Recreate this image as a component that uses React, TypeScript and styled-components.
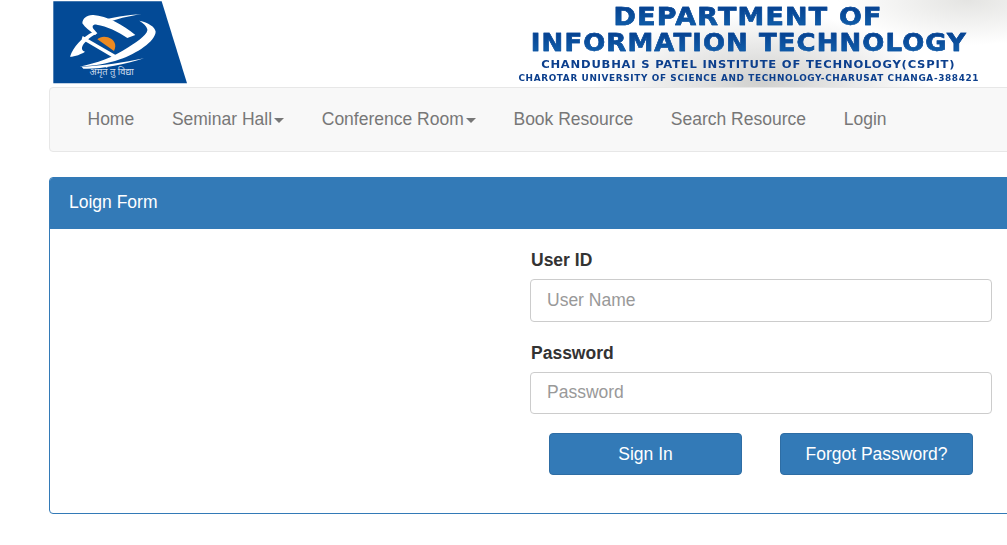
import React from 'react';
import styled, { createGlobalStyle } from 'styled-components';

const NAV_ITEMS = [
  { label: 'Home' },
  { label: 'Seminar Hall', caret: true },
  { label: 'Conference Room', caret: true },
  { label: 'Book Resource' },
  { label: 'Search Resource' },
  { label: 'Login' },
];

export default function App() {
  return (
    <Page>
      <GlobalStyle />
      <Banner>
        <Logo />
        <Heading>
          <MainTitle>DEPARTMENT OF</MainTitle>
          <DeptTitle>INFORMATION TECHNOLOGY</DeptTitle>
          <Institute>CHANDUBHAI S PATEL INSTITUTE OF TECHNOLOGY(CSPIT)</Institute>
          <University>CHAROTAR UNIVERSITY OF SCIENCE AND TECHNOLOGY-CHARUSAT CHANGA-388421</University>
        </Heading>
      </Banner>
      <Navbar>
        {NAV_ITEMS.map((item) => (
          <NavLink key={item.label} href="#">
            {item.label}
            {item.caret && <Caret />}
          </NavLink>
        ))}
      </Navbar>
      <Panel>
        <PanelHeading>Loign Form</PanelHeading>
        <PanelBody>
          <Form>
            <Label>User ID</Label>
            <Input placeholder="User Name" />
            <Label>Password</Label>
            <Input placeholder="Password" type="password" />
            <Buttons>
              <Button type="button">Sign In</Button>
              <Button type="button">Forgot Password?</Button>
            </Buttons>
          </Form>
        </PanelBody>
      </Panel>
    </Page>
  );
}

function Logo() {
  return (
    <LogoMark viewBox="39 0 405 252" aria-hidden="true">
      <polygon points="40,4 365,4 441,250 40,250" fill="#034a96" />
      <path
        d="M127 70C128 55 140 44 160 45C200 47 250 75 286 105L262 114C235 95 200 78 170 74C160 73 155 78 160 86L172 100L165 105C148 92 135 82 127 70Z"
        fill="#fff"
      />
      <path d="M305 43C270 47 225 58 190 72L180 64C215 52 260 45 305 43Z" fill="#fff" />
      <path
        d="M298 62C325 68 345 80 347 95C345 125 290 160 240 178C200 192 160 198 118 200C170 190 220 172 265 142C300 120 325 100 322 88C320 78 310 70 298 62Z"
        fill="#fff"
      />
      <path d="M125 200C190 198 250 188 312 175C250 195 180 208 130 206Z" fill="#fff" />
      <path
        d="M160 95C125 112 100 140 90 170C105 170 125 162 135 155C120 150 125 135 140 122C150 113 158 107 168 102Z"
        fill="#fff"
      />
      <path d="M128 108L232 168L222 175L125 118Z" fill="#fff" />
      <path d="M172 118C180 110 192 108 204 112C222 118 232 134 222 153Z" fill="#ec8a22" />
      <LogoMotto x="215" y="224">अमृतं तु विद्या</LogoMotto>
    </LogoMark>
  );
}

const GlobalStyle = createGlobalStyle`
  html, body {
    margin: 0;
    background: #fff;
    overflow: hidden;
  }
  body {
    font-family: "Liberation Sans", Arial, sans-serif;
    color: #333;
  }
`;

const Page = styled.div`
  width: 1007px;
  height: 545px;
  overflow: hidden;
  padding-left: 49px;
  box-sizing: border-box;
`;

const Banner = styled.header`
  display: flex;
  justify-content: space-between;
  width: 958px;
  height: 87px;
  padding-left: 4px;
  box-sizing: border-box;
`;

const LogoMark = styled.svg`
  width: 135px;
  height: 84px;
  flex: none;
`;

const LogoMotto = styled.text`
  fill: #cfdcec;
  font-family: "Noto Sans", "DejaVu Sans", sans-serif;
  font-size: 28px;
  text-anchor: middle;
`;

const Heading = styled.div`
  width: 489px;
  height: 87px;
  display: flex;
  flex-direction: column;
  align-items: center;
  padding: 5px 28px 0 0;
  box-sizing: border-box;
  font-family: "DejaVu Sans", Verdana, sans-serif;
  font-weight: 700;
  white-space: nowrap;
  background:
    radial-gradient(ellipse 170px 70px at 50% 95%, #d0d0ce 0%, rgba(255, 255, 255, 0) 100%),
    radial-gradient(ellipse 130px 45px at 92% 0%, #e4e4e2 0%, rgba(255, 255, 255, 0) 100%);
`;

const MainTitle = styled.div`
  font-size: 24px;
  line-height: 25px;
  letter-spacing: 1.1px;
  transform: scaleX(1.12);
  background: linear-gradient(180deg, #053f8e 0%, #1163ae 100%);
  -webkit-background-clip: text;
  background-clip: text;
  color: transparent;
  -webkit-text-stroke: 0.5px #0a4c9c;
`;

const DeptTitle = styled(MainTitle)`
  margin-top: 1px;
  line-height: 24px;
  letter-spacing: 1.02px;
  transform: scaleX(1.08);
`;

const Institute = styled.div`
  font-size: 11px;
  line-height: 13px;
  margin-top: 2.5px;
  letter-spacing: 0.75px;
  transform: scaleX(1.05);
  color: #0c3f8d;
`;

const University = styled.div`
  font-size: 8.6px;
  line-height: 12px;
  margin-top: 1.5px;
  letter-spacing: 0.62px;
  transform: scaleX(1.034);
  color: #0c3f8d;
`;

const Navbar = styled.nav`
  display: flex;
  align-items: center;
  gap: 37.7px;
  width: 1170px;
  height: 65px;
  padding-left: 37.5px;
  box-sizing: border-box;
  background: #f8f8f8;
  border: 1px solid #e7e7e7;
  border-radius: 4px;
`;

const NavLink = styled.a`
  display: flex;
  align-items: center;
  font-size: 17.5px;
  color: #777;
  text-decoration: none;
`;

const Caret = styled.span`
  width: 0;
  height: 0;
  margin-left: 2px;
  margin-top: 2px;
  border-top: 5px solid #777;
  border-left: 5px solid transparent;
  border-right: 5px solid transparent;
`;

const Panel = styled.section`
  width: 1170px;
  height: 337px;
  margin-top: 25px;
  box-sizing: border-box;
  border: 1px solid #337ab7;
  border-radius: 4px;
  overflow: hidden;
`;

const PanelHeading = styled.div`
  height: 51px;
  padding: 0 19px 2px;
  box-sizing: border-box;
  display: flex;
  align-items: center;
  background: #337ab7;
  color: #fff;
  font-size: 17.5px;
`;

const PanelBody = styled.div`
  padding: 20px 0 0 480px;
`;

const Form = styled.form`
  width: 462px;
  display: flex;
  flex-direction: column;
`;

const Label = styled.label`
  font-size: 17.5px;
  font-weight: 700;
  line-height: 22.5px;
  margin: 0 0 7.5px 1px;
  color: #333;
`;

const Input = styled.input`
  height: 42.5px;
  margin-bottom: 20px;
  padding: 0 16px;
  box-sizing: border-box;
  background: #fff;
  border: 1px solid #ccc;
  border-radius: 4px;
  font-family: inherit;
  font-size: 17.5px;
  outline: none;
  &::placeholder {
    color: #999;
  }
`;

const Buttons = styled.div`
  display: flex;
  justify-content: space-between;
  margin-top: -1.5px;
  padding: 0 19px;
`;

const Button = styled.button`
  width: 193px;
  height: 42px;
  padding: 1px 0 0;
  background: #337ab7;
  border: 1px solid #2e6da4;
  border-radius: 4px;
  color: #fff;
  font-family: inherit;
  font-size: 17.5px;
`;
